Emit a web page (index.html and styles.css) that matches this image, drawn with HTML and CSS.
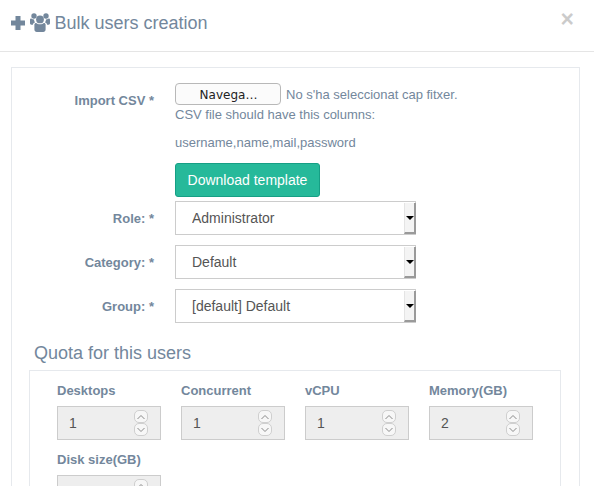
FILE: index.html
```html
<!DOCTYPE html>
<html lang="en">
<head>
<meta charset="utf-8">
<title>Bulk users creation</title>
<link rel="stylesheet" href="styles.css">
</head>
<body>
<div class="modal">
  <header class="modal-header">
    <h4 class="modal-title">
      <svg class="icon-plus" viewBox="0 0 14 14" width="14" height="14"><path d="M4.500 0h5v4.500H14v5H9.500V14h-5V9.500H0v-5h4.500z"/></svg>
      <svg class="icon-users" viewBox="0 0 20 19" width="20" height="19"><circle cx="10" cy="6.400" r="3.900"/><circle cx="4" cy="3" r="2.700"/><circle cx="16" cy="3" r="2.700"/><path d="M4.400 11.600c0-1.100.8-1.700 1.800-1.700.9.900 2.300 1.400 3.800 1.400s2.900-.5 3.800-1.400c1 0 1.800.6 1.800 1.700v5c0 1.400-1 2.400-2.400 2.400H6.800c-1.400 0-2.400-1-2.400-2.400z"/><path d="M0 6.800c0-.9.600-1.300 1.300-1.300.8.700 1.800 1 2.800 1-.1 1 .3 2 1 2.800-1.200.4-2 1.200-2.200 2.400H1.400C.6 11.700 0 11.100 0 10.300zM20 6.800c0-.9-.6-1.300-1.300-1.300-.8.700-1.800 1-2.800 1 .1 1-.3 2-1 2.800 1.200.4 2 1.200 2.200 2.400h1.500c.8 0 1.400-.6 1.400-1.400z"/></svg>
      <span>Bulk users creation</span>
    </h4>
    <span class="close">×</span>
  </header>
  <div class="panel">
    <form class="form">
      <label class="form-label label-import">Import CSV *</label>
      <div class="import-field">
        <div class="file-row"><button type="button" class="file-button">Navega…</button><span class="file-name">No s'ha seleccionat cap fitxer.</span></div>
        <p class="help first">CSV file should have this columns:</p>
        <p class="help second">username,name,mail,password</p>
        <button type="button" class="btn-download">Download template</button>
      </div>

      <label class="form-label">Role: *</label>
      <div class="select-wrap">
        <select class="select"><option>Administrator</option></select>
        <span class="select-arrow"></span>
      </div>

      <label class="form-label">Category: *</label>
      <div class="select-wrap">
        <select class="select"><option>Default</option></select>
        <span class="select-arrow"></span>
      </div>

      <label class="form-label">Group: *</label>
      <div class="select-wrap">
        <select class="select"><option>[default] Default</option></select>
        <span class="select-arrow"></span>
      </div>
    </form>

    <h3 class="quota-title">Quota for this users</h3>
    <div class="quota">
      <div class="quota-field">
        <label class="quota-label">Desktops</label>
        <div class="number"><input class="number-input" type="text" value="1" disabled>
          <span class="spin"><span class="spin-btn"><svg viewBox="0 0 10 6" width="10" height="6"><path d="M1.500 5L5 1.500 8.500 5"/></svg></span><span class="spin-btn"><svg viewBox="0 0 10 6" width="10" height="6"><path d="M1.500 1L5 4.500 8.500 1"/></svg></span></span></div>
      </div>
      <div class="quota-field">
        <label class="quota-label">Concurrent</label>
        <div class="number"><input class="number-input" type="text" value="1" disabled>
          <span class="spin"><span class="spin-btn"><svg viewBox="0 0 10 6" width="10" height="6"><path d="M1.500 5L5 1.500 8.500 5"/></svg></span><span class="spin-btn"><svg viewBox="0 0 10 6" width="10" height="6"><path d="M1.500 1L5 4.500 8.500 1"/></svg></span></span></div>
      </div>
      <div class="quota-field">
        <label class="quota-label">vCPU</label>
        <div class="number"><input class="number-input" type="text" value="1" disabled>
          <span class="spin"><span class="spin-btn"><svg viewBox="0 0 10 6" width="10" height="6"><path d="M1.500 5L5 1.500 8.500 5"/></svg></span><span class="spin-btn"><svg viewBox="0 0 10 6" width="10" height="6"><path d="M1.500 1L5 4.500 8.500 1"/></svg></span></span></div>
      </div>
      <div class="quota-field">
        <label class="quota-label">Memory(GB)</label>
        <div class="number"><input class="number-input" type="text" value="2" disabled>
          <span class="spin"><span class="spin-btn"><svg viewBox="0 0 10 6" width="10" height="6"><path d="M1.500 5L5 1.500 8.500 5"/></svg></span><span class="spin-btn"><svg viewBox="0 0 10 6" width="10" height="6"><path d="M1.500 1L5 4.500 8.500 1"/></svg></span></span></div>
      </div>
      <div class="quota-field">
        <label class="quota-label">Disk size(GB)</label>
        <div class="number"><input class="number-input" type="text" value="" disabled>
          <span class="spin"><span class="spin-btn"><svg viewBox="0 0 10 6" width="10" height="6"><path d="M1.500 5L5 1.500 8.500 5"/></svg></span><span class="spin-btn"><svg viewBox="0 0 10 6" width="10" height="6"><path d="M1.500 1L5 4.500 8.500 1"/></svg></span></span></div>
      </div>
    </div>
  </div>
</div>
</body>
</html>
```

FILE: styles.css
```css
* { box-sizing: border-box; }
html, body { margin: 0; height: 486px; overflow: hidden; background: #fff; }
body { font-family: "Liberation Sans", Arial, sans-serif; font-size: 13px; color: #73879C; }

.modal-header {
  position: relative;
  height: 52px;
  border-bottom: 1px solid #e5e5e5;
  padding: 13px 0 0 11px;
}
.modal-title {
  display: flex;
  align-items: center;
  margin: 0;
  height: 20px;
  font-size: 18px;
  font-weight: 400;
  line-height: 20px;
}
.modal-title svg { fill: #73879C; flex: none; margin-top: -1px; }
.icon-plus { margin-right: 5px; }
.icon-users { margin-right: 5px; }
.modal-title span { margin-left: -0.5px; }
.close {
  position: absolute;
  top: 7px;
  right: 20px;
  font-size: 23px;
  line-height: 25px;
  font-weight: 700;
  color: #000;
  opacity: .2;
}

.panel {
  margin: 15px 14px 0 11px;
  border: 1px solid #E6E9ED;
  padding: 15px 17px 0;
}
.form {
  display: grid;
  grid-template-columns: 125px 241px;
  column-gap: 21px;
  row-gap: 10px;
  align-items: center;
  margin-left: -17px;
  padding-left: 17px;
}
.form-label {
  font-weight: 700;
  text-align: right;
}
.label-import { align-self: start; margin-top: 10px; line-height: 15px; }
.import-field { margin-bottom: -6px; width: 380px; }
.file-row { display: flex; align-items: center; height: 22px; }
.file-button {
  width: 106px;
  height: 22px;
  padding: 1px 0 0 1px;
  background: #fbfbfb;
  border: 1px solid #b8b8b8;
  border-radius: 4px;
  font-family: "DejaVu Sans", sans-serif;
  font-size: 12px;
  color: #222;
}
.file-name { margin-left: 5px; }
.help { margin: 0; line-height: 18px; }
.help.first { margin-top: 1px; }
.help.second { margin-top: 10px; }
.btn-download {
  display: block;
  margin-top: 11px;
  width: 145px;
  height: 34px;
  padding: 0;
  background: #26B99A;
  border: 1px solid #169F85;
  border-radius: 3px;
  font-family: inherit;
  font-size: 14px;
  color: #fff;
}

.select-wrap { position: relative; height: 34px; }
.select {
  appearance: none;
  -webkit-appearance: none;
  display: block;
  width: 100%;
  height: 34px;
  padding: 0 0 0 16px;
  background: #fff;
  border: 1px solid #ccc;
  border-radius: 0;
  font-family: inherit;
  font-size: 14px;
  color: #555;
}
.select-arrow {
  position: absolute;
  top: 2px;
  right: 0;
  bottom: 1px;
  width: 12px;
  background: #f4f4f4;
  border-left: 1px solid #e4e4e4;
  border-right: 2px solid #9a9a9a;
  border-bottom: 2px solid #9a9a9a;
}
.select-arrow::after {
  content: "";
  position: absolute;
  left: 1px;
  top: 13px;
  border-left: 4px solid transparent;
  border-right: 4px solid transparent;
  border-top: 4px solid #000;
}

.quota-title {
  margin: 20px 0 0 5px;
  font-size: 18px;
  font-weight: 400;
  line-height: 20px;
}
.quota {
  display: grid;
  grid-template-columns: repeat(4, 104px);
  column-gap: 20px;
  row-gap: 11px;
  margin-top: 7px;
  width: 532px;
  border: 1px solid #E6E9ED;
  padding: 11px 27px 0;
}
.quota-field { display: flex; flex-direction: column; }
.quota-label { font-weight: 700; line-height: 18px; margin-bottom: 6px; }
.number { position: relative; height: 34px; }
.number-input {
  display: block;
  width: 100%;
  height: 34px;
  padding: 0 0 0 11px;
  background: #eee;
  border: 1px solid #ccc;
  border-radius: 0;
  font-family: inherit;
  font-size: 14px;
  color: #555;
  opacity: 1;
}
.spin {
  position: absolute;
  top: 4px;
  right: 13px;
  display: flex;
  flex-direction: column;
}
.spin-btn {
  display: flex;
  align-items: center;
  justify-content: center;
  width: 14px;
  height: 13px;
  background: #f7f7f7;
  border: 1px solid #cfcfcf;
  border-radius: 5px;
}
.spin-btn svg { fill: none; stroke: #8a8a8a; stroke-width: 1; }
```
